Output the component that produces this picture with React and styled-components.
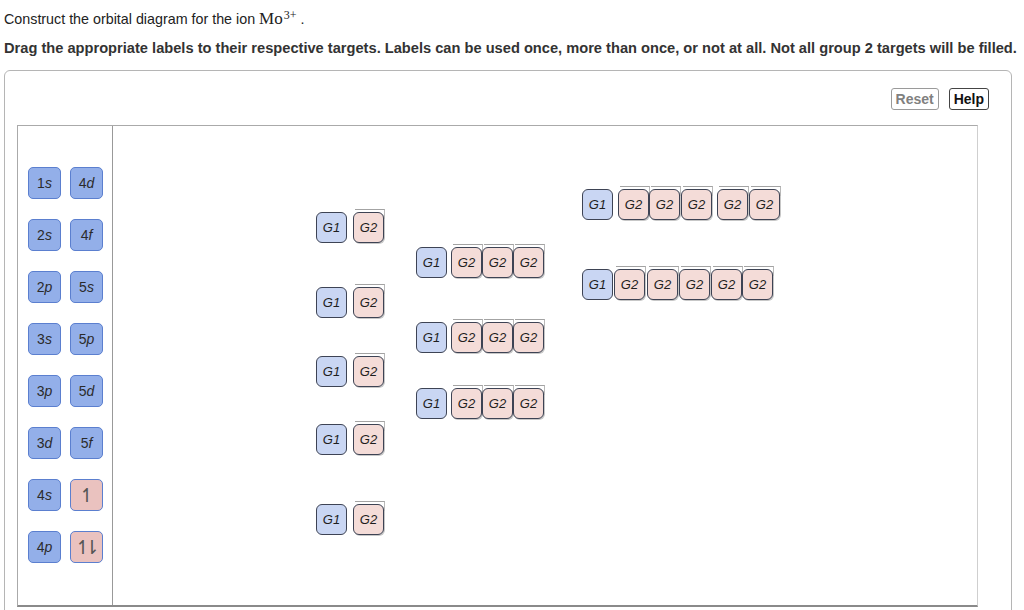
import React from 'react';
import styled, { createGlobalStyle } from 'styled-components';

const GlobalStyle = createGlobalStyle`
  html, body { margin: 0; padding: 0; background: #fff; }
  body { font-family: "Liberation Sans", Arial, Helvetica, sans-serif; color: #222; }
`;

const Page = styled.div`
  width: 1024px;
  height: 610px;
  box-sizing: border-box;
  overflow: hidden;
  padding: 10px 0 0 4px;
`;

const Prompt = styled.p`
  margin: 0;
  font-size: 14.3px;
  line-height: 18px;
  color: #222;
`;

const MathIon = styled.span`
  font-family: "Liberation Serif", "DejaVu Serif", serif;
  font-size: 17px;
`;

const Sup = styled.sup`
  font-size: 12px;
  line-height: 0;
  vertical-align: 5px;
  margin-left: 1px;
`;

const Instructions = styled.p`
  margin: 12px 0 0;
  font-size: 14.65px;
  font-weight: bold;
  line-height: 16px;
  color: #333;
  white-space: nowrap;
`;

const Panel = styled.section`
  margin-top: 14px;
  width: 1008px;
  height: 580px;
  box-sizing: border-box;
  border: 1px solid #b5b5b5;
  border-radius: 6px;
  padding: 17px 22px 0 12px;
`;

const Toolbar = styled.div`
  display: flex;
  justify-content: flex-end;
  gap: 10px;
`;

const ToolButton = styled.button`
  height: 22px;
  padding: 0 4px;
  box-sizing: border-box;
  background: #fff;
  border: 1px solid ${p => (p.$muted ? '#9a9a9a' : '#444')};
  border-radius: 3px;
  font-family: "Liberation Sans", Arial, sans-serif;
  font-size: 14px;
  font-weight: bold;
  color: ${p => (p.$muted ? '#808080' : '#111')};
  cursor: pointer;
`;

const Workspace = styled.div`
  margin-top: 15px;
  margin-right: 11px;
  height: 482px;
  box-sizing: border-box;
  display: flex;
  border-top: 1px solid #aaa;
  border-left: 1px solid #aaa;
  border-right: 1px solid #cfcfcf;
  border-bottom: 2px solid #8a8a8a;
`;

const LabelBank = styled.div`
  width: 95px;
  box-sizing: border-box;
  border-right: 1px solid #999;
  padding: 41px 0 0 10px;
  display: grid;
  grid-template-columns: 33px 33px;
  grid-auto-rows: 32px;
  column-gap: 9px;
  row-gap: 20px;
  align-content: start;
`;

const Label = styled.div`
  box-sizing: border-box;
  border: 1px solid #5b7fcf;
  border-radius: 5px;
  background: ${p => (p.$spin ? '#eac2bf' : '#93afe9')};
  display: flex;
  align-items: center;
  justify-content: center;
  font-size: 14px;
  color: #2b2b2b;
  em { font-style: italic; }
`;

const Spin = styled.span`
  font-family: "DejaVu Sans", sans-serif;
  font-size: 19px;
  font-weight: 200;
  color: #555;
  letter-spacing: ${p => (p.$pair ? '-7px' : '0')};
  margin-left: ${p => (p.$pair ? '-6px' : '0')};
  line-height: 1;
`;

const Canvas = styled.div`
  position: relative;
  flex: 1;
`;

const Orbital = styled.div`
  position: absolute;
  left: ${p => p.$x}px;
  top: ${p => p.$y}px;
  display: flex;
`;

const Target = styled.div`
  position: relative;
  width: 31px;
  height: 31px;
  box-sizing: border-box;
  margin-left: ${p => p.$gap || 0}px;
  border: 1px solid #3d4354;
  border-radius: 6px;
  background: ${p => (p.$group === 2 ? '#f4dcd8' : '#c9d6f3')};
  box-shadow: ${p => (p.$group === 2 ? '1px 1px 0 rgba(0,0,0,0.22)' : 'none')};
  display: flex;
  align-items: center;
  justify-content: center;
  font-size: 13px;
  font-style: italic;
  color: #1e1e1e;

  ${p =>
    p.$group === 2 &&
    `&::before {
      content: '';
      position: absolute;
      top: -4px;
      left: 1px;
      right: -2px;
      height: 9px;
      border-top: 1px solid #a3a3a3;
      border-right: 1px solid #b8b8b8;
      pointer-events: none;
    }`}
`;

const labels = [
  ['1', 's'], ['4', 'd'],
  ['2', 's'], ['4', 'f'],
  ['2', 'p'], ['5', 's'],
  ['3', 's'], ['5', 'p'],
  ['3', 'p'], ['5', 'd'],
  ['3', 'd'], ['5', 'f'],
  ['4', 's'], 'up',
  ['4', 'p'], 'pair',
];

const orbitals = [
  { x: 203, y: 86, gaps: [6] },
  { x: 203, y: 161, gaps: [6] },
  { x: 203, y: 230, gaps: [6] },
  { x: 203, y: 298, gaps: [6] },
  { x: 203, y: 378, gaps: [6] },
  { x: 303, y: 121, gaps: [4, 0, 0] },
  { x: 303, y: 196, gaps: [4, 0, 0] },
  { x: 303, y: 262, gaps: [4, 0, 0] },
  { x: 469, y: 63, gaps: [5, 0, 1, 5, 1] },
  { x: 469, y: 143, gaps: [1, 2, 1, 1, 0] },
];

export default function App() {
  return (
    <>
      <GlobalStyle />
      <Page>
        <Prompt>
          Construct the orbital diagram for the ion{' '}
          <MathIon>
            Mo<Sup>3+</Sup>
          </MathIon>{' '}
          .
        </Prompt>
        <Instructions>
          Drag the appropriate labels to their respective targets. Labels can be used once, more than once, or not at all. Not all group 2 targets will be filled.
        </Instructions>
        <Panel>
          <Toolbar>
            <ToolButton $muted>Reset</ToolButton>
            <ToolButton>Help</ToolButton>
          </Toolbar>
          <Workspace>
            <LabelBank>
              {labels.map((l, i) =>
                l === 'up' ? (
                  <Label key={i} $spin>
                    <Spin>↿</Spin>
                  </Label>
                ) : l === 'pair' ? (
                  <Label key={i} $spin>
                    <Spin $pair>↿⇂</Spin>
                  </Label>
                ) : (
                  <Label key={i}>
                    {l[0]}
                    <em>{l[1]}</em>
                  </Label>
                )
              )}
            </LabelBank>
            <Canvas>
              {orbitals.map((o, i) => (
                <Orbital key={i} $x={o.x} $y={o.y}>
                  <Target $group={1}>G1</Target>
                  {o.gaps.map((g, j) => (
                    <Target key={j} $group={2} $gap={g}>
                      G2
                    </Target>
                  ))}
                </Orbital>
              ))}
            </Canvas>
          </Workspace>
        </Panel>
      </Page>
    </>
  );
}
